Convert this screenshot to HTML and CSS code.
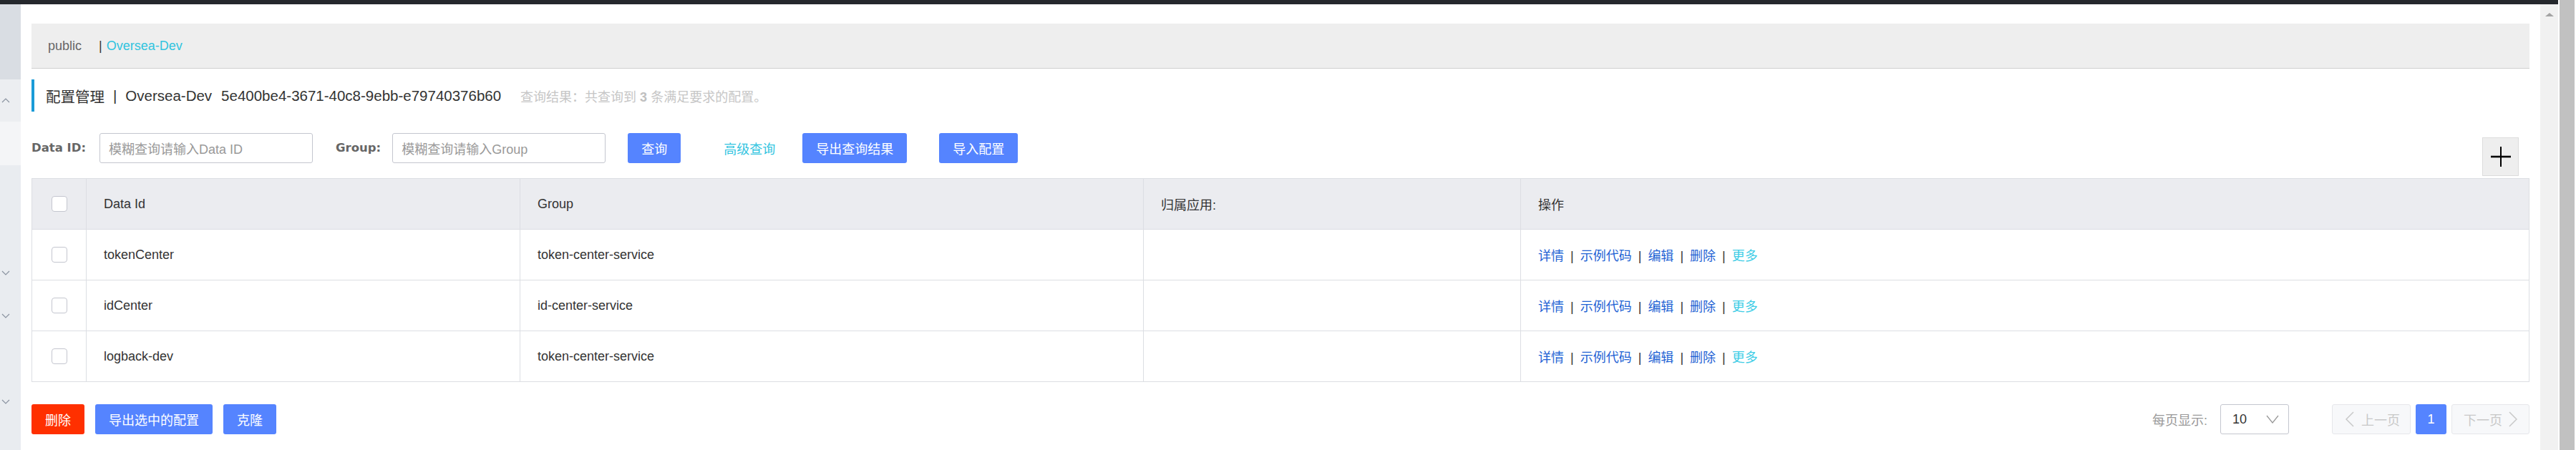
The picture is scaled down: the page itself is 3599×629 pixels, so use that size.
FILE: index.html
```html
<!DOCTYPE html>
<html lang="zh-CN">
<head>
<meta charset="utf-8">
<title>配置管理</title>
<link rel="stylesheet" href="styles.css">
</head>
<body>
<div class="app">
  <div class="frame">
    <div class="topbar"></div>
    <div class="body-row">
      <aside class="sidebar">
        <div class="sb-sec sb-dark"></div>
        <div class="sb-sec sb-mid"><svg class="chev" width="12" height="7" viewBox="0 0 12 7"><polyline points="1,6 6,1 11,6" fill="none" stroke="#8a93a0" stroke-width="1.2"/></svg></div>
        <div class="sb-sec sb-light"></div>
        <div class="sb-item"></div>
        <div class="sb-item"></div>
        <div class="sb-item"><svg class="chev" width="12" height="7" viewBox="0 0 12 7"><polyline points="1,1 6,6 11,1" fill="none" stroke="#8a93a0" stroke-width="1.2"/></svg></div>
        <div class="sb-item"><svg class="chev" width="12" height="7" viewBox="0 0 12 7"><polyline points="1,1 6,6 11,1" fill="none" stroke="#8a93a0" stroke-width="1.2"/></svg></div>
        <div class="sb-item"></div>
        <div class="sb-item"><svg class="chev" width="12" height="7" viewBox="0 0 12 7"><polyline points="1,1 6,6 11,1" fill="none" stroke="#8a93a0" stroke-width="1.2"/></svg></div>
      </aside>

      <main class="main">
        <div class="crumbs">
          <span class="crumb">public</span>
          <span class="crumb-sep">|</span>
          <span class="crumb-link">Oversea-Dev</span>
        </div>

        <div class="title">
          <span>配置管理</span>
          <span class="title-sep">|</span>
          <span>Oversea-Dev</span>
          <span class="title-id">5e400be4-3671-40c8-9ebb-e79740376b60</span>
          <span class="result">查询结果：共查询到 <b>3</b> 条满足要求的配置。</span>
        </div>

        <div class="search">
          <span class="label">Data ID:</span>
          <div class="input input-id">模糊查询请输入Data ID</div>
          <span class="label label-group">Group:</span>
          <div class="input input-group">模糊查询请输入Group</div>
          <span class="btn btn-query">查询</span>
          <span class="link-btn">高级查询</span>
          <span class="btn btn-export">导出查询结果</span>
          <span class="btn btn-import">导入配置</span>
          <span class="add-box"><svg width="30" height="30" viewBox="0 0 30 30"><line x1="1" y1="15" x2="29" y2="15" stroke="#000" stroke-width="2.6"/><line x1="15" y1="1" x2="15" y2="29" stroke="#000" stroke-width="2"/></svg></span>
        </div>

        <table class="grid">
          <colgroup>
            <col class="c-check">
            <col class="c-id">
            <col class="c-group">
            <col class="c-app">
            <col class="c-ops">
          </colgroup>
          <thead>
            <tr>
              <th class="cell-check"><span class="checkbox"></span></th>
              <th>Data Id</th>
              <th>Group</th>
              <th>归属应用:</th>
              <th>操作</th>
            </tr>
          </thead>
          <tbody>
            <tr>
              <td class="cell-check"><span class="checkbox"></span></td>
              <td>tokenCenter</td>
              <td>token-center-service</td>
              <td></td>
              <td class="ops"><a>详情</a><i>|</i><a>示例代码</a><i>|</i><a>编辑</a><i>|</i><a>删除</a><i>|</i><a class="more">更多</a></td>
            </tr>
            <tr>
              <td class="cell-check"><span class="checkbox"></span></td>
              <td>idCenter</td>
              <td>id-center-service</td>
              <td></td>
              <td class="ops"><a>详情</a><i>|</i><a>示例代码</a><i>|</i><a>编辑</a><i>|</i><a>删除</a><i>|</i><a class="more">更多</a></td>
            </tr>
            <tr>
              <td class="cell-check"><span class="checkbox"></span></td>
              <td>logback-dev</td>
              <td>token-center-service</td>
              <td></td>
              <td class="ops"><a>详情</a><i>|</i><a>示例代码</a><i>|</i><a>编辑</a><i>|</i><a>删除</a><i>|</i><a class="more">更多</a></td>
            </tr>
          </tbody>
        </table>

        <div class="footer">
          <span class="btn btn-danger">删除</span>
          <span class="btn btn-gap">导出选中的配置</span>
          <span class="btn btn-gap">克隆</span>
          <div class="pager">
            <span class="pager-label">每页显示:</span>
            <span class="select"><span>10</span><svg width="18" height="12" viewBox="0 0 18 12"><polyline points="1,1 9,11 17,1" fill="none" stroke="#999" stroke-width="1.3"/></svg></span>
            <span class="page-btn page-prev"><svg width="12" height="22" viewBox="0 0 12 22"><polyline points="11,1 1,11 11,21" fill="none" stroke="#c8c8c8" stroke-width="1.5"/></svg><span>上一页</span></span>
            <span class="page-num">1</span>
            <span class="page-btn page-next"><span>下一页</span><svg width="12" height="22" viewBox="0 0 12 22"><polyline points="1,1 11,11 1,21" fill="none" stroke="#c8c8c8" stroke-width="1.5"/></svg></span>
          </div>
        </div>
      </main>

      <div class="inner-scroll"><span class="scroll-up"></span></div>
    </div>
  </div>
  <div class="outer-scroll"></div>
</div>
</body>
</html>
```

FILE: styles.css
```css
html, body {
  margin: 0;
  padding: 0;
  width: 3599px;
  height: 629px;
  overflow: hidden;
  background: #fff;
  font-family: "Liberation Sans", "Noto Sans CJK SC", sans-serif;
  color: #333;
}

.app {
  display: flex;
  height: 629px;
}

.frame {
  width: 3574px;
  display: flex;
  flex-direction: column;
}

.topbar {
  height: 6px;
  background: #25282d;
  flex: none;
}

.body-row {
  flex: 1;
  display: flex;
  min-height: 0;
}

/* sidebar */
.sidebar {
  width: 29px;
  flex: none;
  background: #e9ecf0;
  display: flex;
  flex-direction: column;
}
.sb-sec, .sb-item {
  display: flex;
  align-items: center;
  padding-left: 2px;
  flex: none;
}
.sb-dark { height: 105px; background: #d9dde3; }
.sb-mid { height: 59px; background: #eceef1; }
.sb-light { height: 61px; background: #f4f5f7; }
.sb-item { height: 60px; }

/* main column */
.main {
  flex: 1;
  min-width: 0;
  padding: 27px 15px 0;
}

.crumbs {
  height: 62px;
  background: #eeeeee;
  border-bottom: 1px solid #cfcfcf;
  display: flex;
  align-items: center;
  padding-left: 23px;
  font-size: 18px;
}
.crumb { color: #666; }
.crumb-sep { color: #333; margin-left: 24px; margin-right: 6px; }
.crumb-link { color: #31c4df; }

.title {
  margin-top: 15px;
  height: 45px;
  border-left: 4px solid #1a9bd7;
  padding-left: 16px;
  display: flex;
  align-items: center;
  font-size: 20.5px;
  color: #333;
  white-space: nowrap;
}
.title-sep { margin: 0 12px; }
.title-id { margin-left: 13px; }
.result {
  margin-left: 27px;
  font-size: 18px;
  color: #c6c6c6;
}
.result b { color: #c0c0c0; }

/* search row */
.search {
  margin-top: 30px;
  display: flex;
  align-items: flex-start;
  white-space: nowrap;
}
.label {
  height: 42px;
  line-height: 42px;
  font-family: "DejaVu Sans", sans-serif;
  font-weight: bold;
  font-size: 16.5px;
  color: #666;
}
.label-group { margin-left: 32px; }
.input {
  box-sizing: border-box;
  width: 298px;
  height: 42px;
  border: 1px solid #c4c6cf;
  border-radius: 3px;
  padding-left: 12px;
  display: flex;
  align-items: center;
  color: #999;
  font-size: 18px;
}
.input-id { margin-left: 19px; }
.input-group { margin-left: 16px; }

.btn {
  box-sizing: border-box;
  height: 42px;
  padding: 0 19px;
  border-radius: 3px;
  background: #5584ff;
  color: #fff;
  font-size: 18px;
  display: inline-flex;
  align-items: center;
  flex: none;
}
.btn-query { margin-left: 31px; }
.link-btn {
  height: 42px;
  display: inline-flex;
  align-items: center;
  color: #31c4df;
  font-size: 18px;
  margin-left: 60px;
}
.btn-export { margin-left: 38px; }
.btn-import { margin-left: 45px; }

.add-box {
  box-sizing: border-box;
  margin-left: auto;
  margin-right: 15px;
  margin-top: 6px;
  width: 51px;
  height: 54px;
  background: #eeeeee;
  border: 1px solid #dcdcdc;
  display: flex;
  align-items: center;
  justify-content: center;
}

/* table */
.grid {
  margin-top: 3px;
  width: 3490px;
  border-collapse: collapse;
  table-layout: fixed;
  font-size: 18px;
}
.c-check { width: 76px; }
.c-id { width: 606px; }
.c-group { width: 871px; }
.c-app { width: 527px; }
.grid th, .grid td {
  height: 70px;
  padding: 0 0 0 24px;
  border: 1px solid #dcdee3;
  text-align: left;
  font-weight: normal;
  color: #333;
  white-space: nowrap;
}
.grid th { background: #ebecf0; }
.grid .cell-check {
  padding: 0;
  text-align: center;
}
.checkbox {
  display: inline-block;
  box-sizing: border-box;
  width: 22px;
  height: 22px;
  border: 1px solid #c4c6cf;
  border-radius: 4px;
  background: #fff;
  vertical-align: middle;
}
.ops a { color: #1f63d4; }
.ops a.more { color: #3fcde6; }
.ops i {
  font-style: normal;
  color: #333;
  margin: 0 9px;
}

/* footer */
.footer {
  margin-top: 31px;
  display: flex;
  align-items: center;
  white-space: nowrap;
}
.btn-danger { background: #ff3000; }
.btn-gap { margin-left: 15px; }

.pager {
  margin-left: auto;
  display: flex;
  align-items: center;
  font-size: 18px;
}
.pager-label { color: #999; }
.select {
  box-sizing: border-box;
  margin-left: 18px;
  width: 96px;
  height: 42px;
  border: 1px solid #c4c6cf;
  border-radius: 3px;
  padding: 0 13px 0 16px;
  display: flex;
  align-items: center;
  justify-content: space-between;
  color: #333;
}
.page-btn {
  box-sizing: border-box;
  height: 42px;
  border: 1px solid #e6e7eb;
  border-radius: 3px;
  background: #f7f8fa;
  color: #c8c8c8;
  display: flex;
  align-items: center;
}
.page-prev {
  margin-left: 60px;
  width: 110px;
  padding-left: 18px;
  gap: 10px;
}
.page-next {
  margin-left: 7px;
  width: 109px;
  padding-left: 16px;
  gap: 9px;
}
.page-num {
  box-sizing: border-box;
  margin-left: 7px;
  width: 43px;
  height: 42px;
  border-radius: 3px;
  background: #5584ff;
  color: #fff;
  display: flex;
  align-items: center;
  justify-content: center;
}

/* scrollbars */
.inner-scroll {
  width: 25px;
  flex: none;
  background: #f1f1f1;
  display: flex;
  flex-direction: column;
  align-items: center;
}
.scroll-up {
  margin-top: 12px;
  width: 0;
  height: 0;
  border-left: 6px solid transparent;
  border-right: 6px solid transparent;
  border-bottom: 5px solid #a3a3a3;
}
.outer-scroll {
  margin-left: 2px;
  width: 21px;
  background: #c1c1c1;
}
```
